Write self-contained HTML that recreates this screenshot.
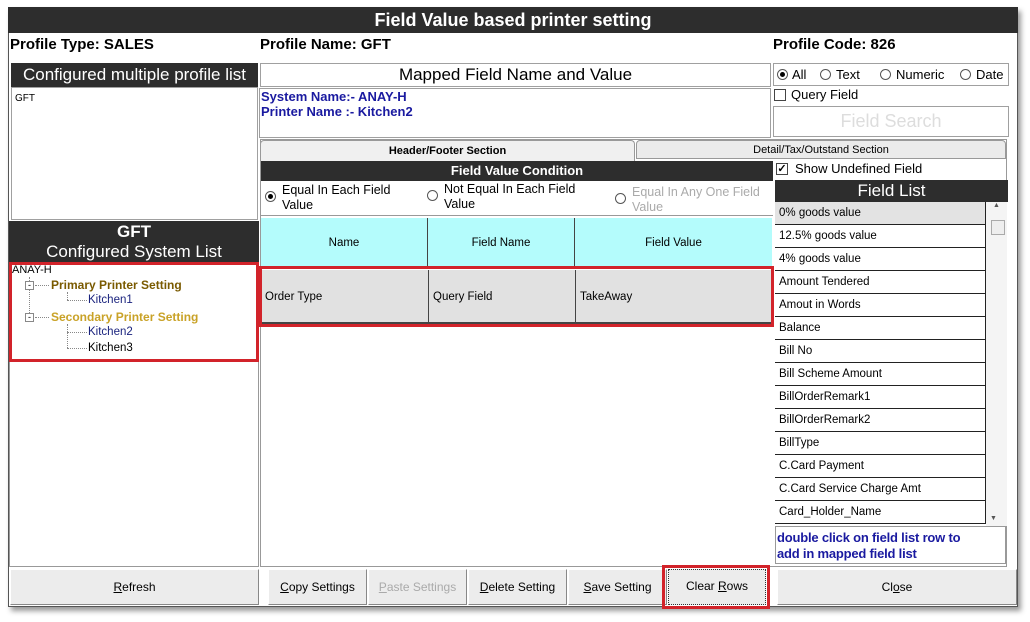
<!DOCTYPE html>
<html><head><style>
*{margin:0;padding:0;box-sizing:border-box}
body{width:1030px;height:622px;background:#fff;position:relative;font-family:"Liberation Sans",sans-serif;overflow:hidden}
div{position:absolute}
.dark{background:#2d2d2d;color:#fff;text-align:center}
.box{border:1px solid #a0a0a0;background:#fff}
.btn{background:#ececec;border:1px solid #fff;border-right-color:#888;border-bottom-color:#888;font-size:12px;text-align:center;line-height:34px;color:#000}
.li{left:775px;width:211px;height:23px;border-bottom:1px solid #222;border-right:1px solid #222;font-size:11.5px;line-height:22px;padding-left:4px;background:#fff}
.rad{width:11px;height:11px;border:1px solid #555;border-radius:50%;background:#fff}
.red{border:3px solid #d2232a}
</style></head><body>
<div style="left:8px;top:7px;width:1010px;height:600px;background:#fff;border:1px solid #555;box-shadow:3px 4px 5px #999"></div>
<div class="dark" style="left:8px;top:7px;width:1010px;height:26px;font-weight:bold;font-size:18px;line-height:26px">Field Value based printer setting</div>
<div style="left:10px;top:36px;font-weight:bold;font-size:15px">Profile Type: SALES</div>
<div style="left:260px;top:36px;font-weight:bold;font-size:15px">Profile Name: GFT</div>
<div style="left:773px;top:36px;font-weight:bold;font-size:15px">Profile Code: 826</div>

<div class="dark" style="left:11px;top:63px;width:247px;height:24px;font-size:17px;line-height:24px">Configured multiple profile list</div>
<div class="box" style="left:11px;top:87px;width:247px;height:133px;font-size:10px;padding:5px 3px">GFT</div>
<div class="dark" style="left:9px;top:221px;width:250px;height:41px;font-size:17px;line-height:20px;padding-top:1px"><b>GFT</b><br>Configured System List</div>
<div class="box" style="left:9px;top:262px;width:250px;height:305px;border-color:#999"></div>
<div class="red" style="left:9px;top:262px;width:250px;height:100px"></div>
<div style="left:12px;top:264px;font-size:11px">ANAY-H</div>
<div style="left:29px;top:277px;width:1px;height:44px;border-left:1px dotted #888"></div>
<div style="left:25px;top:281px;width:9px;height:9px;border:1px solid #888;background:#fff;font-size:9px;line-height:6px;text-align:center">-</div>
<div style="left:25px;top:313px;width:9px;height:9px;border:1px solid #888;background:#fff;font-size:9px;line-height:6px;text-align:center">-</div>
<div style="left:35px;top:285px;width:14px;border-top:1px dotted #888"></div>
<div style="left:35px;top:317px;width:14px;border-top:1px dotted #888"></div>
<div style="left:51px;top:278px;font-size:12px;font-weight:bold;color:#7a5a00">Primary Printer Setting</div>
<div style="left:51px;top:310px;font-size:12px;font-weight:bold;color:#c9a227">Secondary Printer Setting</div>
<div style="left:67px;top:292px;width:1px;height:8px;border-left:1px dotted #888"></div>
<div style="left:67px;top:300px;width:20px;border-top:1px dotted #888"></div>
<div style="left:67px;top:324px;width:1px;height:24px;border-left:1px dotted #888"></div>
<div style="left:67px;top:332px;width:20px;border-top:1px dotted #888"></div>
<div style="left:67px;top:348px;width:20px;border-top:1px dotted #888"></div>
<div style="left:88px;top:294px;font-size:11.5px;color:#1a237e">Kitchen1</div>
<div style="left:88px;top:326px;font-size:11.5px;color:#1a237e">Kitchen2</div>
<div style="left:88px;top:342px;font-size:11.5px">Kitchen3</div>

<div class="box" style="left:260px;top:63px;width:511px;height:24px;font-size:17px;line-height:22px;text-align:center">Mapped Field Name and Value</div>
<div class="box" style="left:259px;top:88px;width:512px;height:50px;font-size:13px;font-weight:bold;color:#1a1aa0;line-height:15px;padding-left:1px">System Name:- ANAY-H<br>Printer Name :- Kitchen2</div>
<div class="box" style="left:773px;top:63px;width:236px;height:23px;font-size:13px;line-height:21px"><span style="position:absolute;left:3px;top:5px" class="rad"></span><span style="position:absolute;left:6px;top:8px;width:5px;height:5px;border-radius:50%;background:#000"></span><span style="position:absolute;left:18px">All</span><span style="position:absolute;left:46px;top:5px" class="rad"></span><span style="position:absolute;left:62px">Text</span><span style="position:absolute;left:106px;top:5px" class="rad"></span><span style="position:absolute;left:122px">Numeric</span><span style="position:absolute;left:186px;top:5px" class="rad"></span><span style="position:absolute;left:202px">Date</span></div>
<div style="left:774px;top:89px;width:12px;height:12px;border:1px solid #444"></div>
<div style="left:791px;top:87px;font-size:13px">Query Field</div>
<div class="box" style="left:773px;top:106px;width:236px;height:31px;font-size:18px;color:#ddd;text-align:center;line-height:28px">Field Search</div>

<div style="left:260px;top:139px;width:747px;height:428px;border:1px solid #999;background:#fff"></div>
<div style="left:260px;top:140px;width:375px;height:21px;background:#f0f0f0;border:1px solid #999;border-bottom:none;border-radius:4px 4px 0 0;font-size:11px;font-weight:bold;text-align:center;line-height:20px">Header/Footer Section</div>
<div style="left:636px;top:140px;width:370px;height:19px;background:#ebebeb;border:1px solid #999;border-radius:4px 4px 0 0;font-size:11px;text-align:center;line-height:18px">Detail/Tax/Outstand Section</div>
<div class="dark" style="left:261px;top:161px;width:512px;height:20px;font-size:13px;font-weight:bold;line-height:20px">Field Value Condition</div>
<div style="left:261px;top:181px;width:512px;height:35px;border-bottom:1px solid #999;font-size:12.5px;line-height:15px">
<span class="rad" style="position:absolute;left:4px;top:10px"></span><span style="position:absolute;left:7px;top:13px;width:5px;height:5px;border-radius:50%;background:#000"></span>
<span style="position:absolute;left:21px;top:2px">Equal In Each Field<br>Value</span>
<span class="rad" style="position:absolute;left:166px;top:9px"></span><span style="position:absolute;left:183px;top:1px">Not Equal In Each Field<br>Value</span>
<span class="rad" style="position:absolute;left:354px;top:12px"></span><span style="position:absolute;left:371px;top:4px;color:#aaa">Equal In Any One Field<br>Value</span></div>
<div style="left:261px;top:218px;width:511px;height:50px;background:#b4fcfc;font-size:11.5px;line-height:50px;border-bottom:1px solid #444">
<span style="position:absolute;left:0;width:167px;text-align:center;border-right:1px solid #444;height:50px">Name</span><span style="position:absolute;left:167px;width:147px;text-align:center;border-right:1px solid #444;height:50px">Field Name</span><span style="position:absolute;left:314px;width:197px;text-align:center">Field Value</span></div>
<div style="left:261px;top:270px;width:511px;height:54px;background:#e1e1e1;font-size:11.5px;line-height:54px;border-bottom:2px solid #444">
<span style="position:absolute;left:4px">Order Type</span><span style="position:absolute;left:167px;height:53px;border-left:1px solid #444;padding-left:4px">Query Field</span><span style="position:absolute;left:314px;height:53px;border-left:1px solid #444;padding-left:4px">TakeAway</span></div>
<div class="red" style="left:259px;top:266px;width:515px;height:61px"></div>

<div style="left:776px;top:163px;width:12px;height:12px;border:1px solid #444;font-size:11px;line-height:10px;text-align:center;font-weight:bold">✓</div>
<div style="left:795px;top:161px;font-size:13px">Show Undefined Field</div>
<div class="dark" style="left:775px;top:180px;width:233px;height:22px;font-size:17px;line-height:22px">Field List</div>
<div class="li" style="top:202px;background:#e3e3e3">0% goods value</div>
<div class="li" style="top:225px">12.5% goods value</div>
<div class="li" style="top:248px">4% goods value</div>
<div class="li" style="top:271px">Amount Tendered</div>
<div class="li" style="top:294px">Amout in Words</div>
<div class="li" style="top:317px">Balance</div>
<div class="li" style="top:340px">Bill No</div>
<div class="li" style="top:363px">Bill Scheme Amount</div>
<div class="li" style="top:386px">BillOrderRemark1</div>
<div class="li" style="top:409px">BillOrderRemark2</div>
<div class="li" style="top:432px">BillType</div>
<div class="li" style="top:455px">C.Card Payment</div>
<div class="li" style="top:478px">C.Card Service Charge Amt</div>
<div class="li" style="top:501px">Card_Holder_Name</div>
<div style="left:986px;top:202px;width:21px;height:324px;background:#f4f4f4;font-size:7px;text-align:center;color:#555">▲</div>
<div style="left:991px;top:220px;width:14px;height:15px;border:1px solid #aaa;background:#eee"></div>
<div style="left:990px;top:515px;font-size:7px;color:#555">▼</div>
<div style="left:775px;top:526px;width:231px;height:38px;border:1px solid #999;background:#fff;font-size:13px;font-weight:bold;color:#1a1aa0;line-height:16px;padding:3px 1px;letter-spacing:-0.2px;white-space:nowrap">double click on field list row to<br>add in mapped field list</div>

<div class="btn" style="left:10px;top:569px;width:249px;height:36px"><u>R</u>efresh</div>
<div class="btn" style="left:268px;top:569px;width:99px;height:36px"><u>C</u>opy Settings</div>
<div class="btn" style="left:368px;top:569px;width:99px;height:36px;color:#aaa"><u>P</u>aste Settings</div>
<div class="btn" style="left:468px;top:569px;width:99px;height:36px"><u>D</u>elete Setting</div>
<div class="btn" style="left:568px;top:569px;width:99px;height:36px"><u>S</u>ave Setting</div>
<div class="btn" style="left:668px;top:569px;width:98px;height:36px;border:1px dotted #333;line-height:32px">Clear <u>R</u>ows</div>
<div class="red" style="left:662px;top:565px;width:108px;height:44px"></div>
<div class="btn" style="left:777px;top:569px;width:240px;height:36px">Cl<u>o</u>se</div>
</body></html>
